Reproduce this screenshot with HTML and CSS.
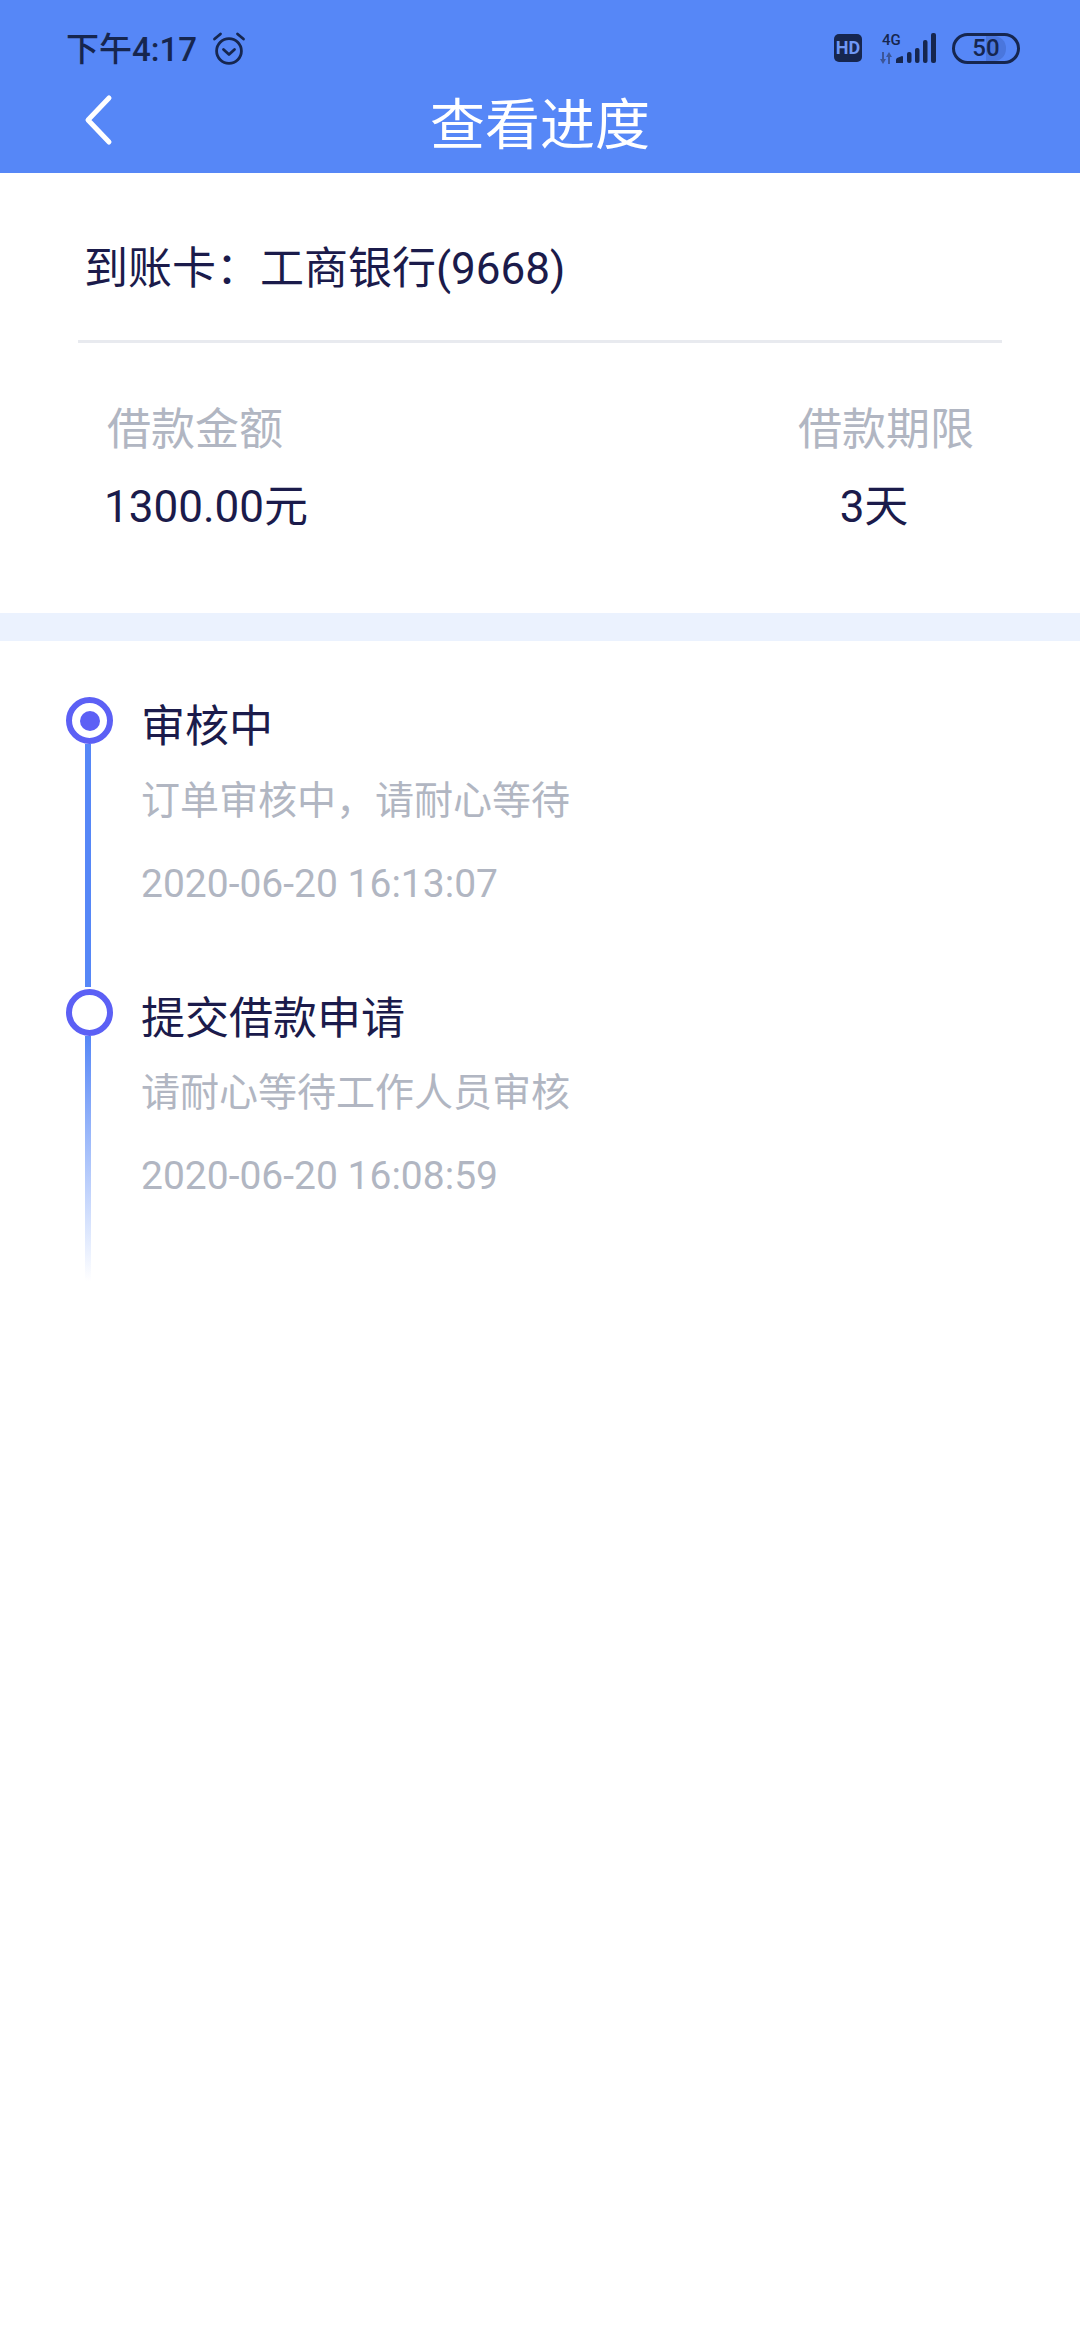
FILE: index.html
```html
<!DOCTYPE html>
<html lang="zh">
<head>
  <meta charset="UTF-8">
  <title>查看进度</title>
  <link rel="stylesheet" href="styles.css">
</head>
<body>
  <header class="top">
    <div class="status">
      <div class="status-left">
        <span class="time">下午4:17</span>
        <svg class="alarm" width="34" height="36" viewBox="0 0 34 36" fill="none" stroke="#16264f" stroke-width="2.8" stroke-linecap="round" stroke-linejoin="round">
          <circle cx="17" cy="21" r="12.4"/>
          <path d="M11.5 19.5l5.5 5 5.5-5"/>
          <path d="M2.5 9l6-5M31.5 9l-6-5"/>
        </svg>
      </div>
      <div class="status-right">
        <span class="hd">HD</span>
        <div class="net">
          <span class="net-label">4G</span>
          <svg class="net-arrows" width="14" height="12" viewBox="0 0 14 12" fill="#3c5699">
            <path d="M3 0h2v7h2l-3 5-3-5h2zM9 12h2V5h2l-3-5-3 5h2z"/>
          </svg>
        </div>
        <svg class="signal" width="40" height="30" viewBox="0 0 40 30" fill="#16264f">
          <path d="M0 30v-3q0-1 1-2l5-2q1 0 1 1v6z"/>
          <rect x="11" y="19" width="4.5" height="11" rx="2"/>
          <rect x="19" y="15" width="4.5" height="15" rx="2"/>
          <rect x="27" y="7" width="4.5" height="23" rx="2"/>
          <rect x="35" y="0" width="5" height="30" rx="2"/>
        </svg>
        <div class="battery">
          <span class="battery-fill"></span>
          <span class="battery-num">50</span>
        </div>
      </div>
    </div>
    <div class="nav">
      <svg class="back" width="34" height="54" viewBox="0 0 34 54" fill="none" stroke="#fff" stroke-width="5" stroke-linecap="round" stroke-linejoin="round">
        <path d="M25 4L4 26l21 22"/>
      </svg>
      <h1 class="title">查看进度</h1>
    </div>
  </header>

  <section class="card">
    <p class="bank">到账卡：工商银行(9668)</p>
    <div class="loan">
      <div class="loan-col">
        <span class="loan-label">借款金额</span>
        <span class="loan-value loan-amount">1300.00元</span>
      </div>
      <div class="loan-col loan-col-right">
        <span class="loan-label">借款期限</span>
        <span class="loan-value loan-term">3天</span>
      </div>
    </div>
  </section>

  <section class="timeline">
    <div class="step">
      <div class="rail">
        <span class="dot dot-active"></span>
        <span class="line"></span>
      </div>
      <div class="step-body">
        <h2 class="step-title">审核中</h2>
        <p class="step-desc">订单审核中，请耐心等待</p>
        <p class="step-date">2020-06-20 16:13:07</p>
      </div>
    </div>
    <div class="step">
      <div class="rail">
        <span class="dot"></span>
        <span class="line line-fade"></span>
      </div>
      <div class="step-body">
        <h2 class="step-title">提交借款申请</h2>
        <p class="step-desc">请耐心等待工作人员审核</p>
        <p class="step-date">2020-06-20 16:08:59</p>
      </div>
    </div>
  </section>
</body>
</html>
```

FILE: styles.css
```css
* {
  box-sizing: border-box;
}
body {
  margin: 0;
  background: #fff;
  font-family: Roboto, "Noto Sans CJK SC", sans-serif;
  color: #1b1b4b;
}
h1, h2, p {
  margin: 0;
  font-weight: 400;
}

/* top bar */
.top {
  height: 173px;
  background: #5687f7;
}
.status {
  height: 76px;
  padding: 20px 60px 0 66px;
  display: flex;
  justify-content: space-between;
  align-items: center;
  color: #16264f;
}
.status-left, .status-right {
  display: flex;
  align-items: center;
}
.time {
  margin-top: -2px;
  font-size: 33px;
  font-weight: 500;
}
.alarm {
  margin-left: 15px;
}
.hd {
  width: 28px;
  height: 28px;
  border-radius: 5px;
  background: #16264f;
  color: #6f98f5;
  font-size: 18px;
  font-weight: 700;
  line-height: 28px;
  text-align: center;
}
.net {
  width: 26px;
  margin-left: 17px;
  display: flex;
  flex-direction: column;
  align-items: flex-start;
}
.net-label {
  margin-left: 3px;
  font-size: 15px;
  font-weight: 500;
  line-height: 15px;
}
.net-arrows {
  margin-top: 4px;
}
.signal {
  margin-left: -9px;
}
.battery {
  position: relative;
  width: 68px;
  height: 31px;
  margin-left: 16px;
  border: 3px solid #16264f;
  border-radius: 16px;
  overflow: hidden;
  display: flex;
  align-items: center;
  justify-content: center;
}
.battery-fill {
  position: absolute;
  top: 0;
  bottom: 0;
  left: 50%;
  width: 32%;
  background: #4a76dd;
  border-radius: 0 12px 12px 0;
}
.battery-num {
  position: relative;
  font-size: 24px;
  font-weight: 500;
}
.nav {
  position: relative;
  height: 97px;
  padding-bottom: 10px;
  display: flex;
  align-items: center;
  justify-content: center;
}
.back {
  position: absolute;
  left: 84px;
  top: 18px;
}
.title {
  font-size: 55px;
  color: #fff;
}

/* card */
.card {
  height: 440px;
  padding: 0 78px;
}
.bank {
  height: 170px;
  padding: 61px 6px 0;
  border-bottom: 3px solid #e8eaef;
  font-size: 44px;
  line-height: 70px;
}
.loan {
  padding: 0 28px 0 29px;
  display: flex;
  justify-content: space-between;
}
.loan-col {
  padding-top: 57px;
  display: flex;
  flex-direction: column;
  align-items: flex-start;
}
.loan-col-right {
  align-items: center;
}
.loan-label {
  font-size: 44px;
  line-height: 60px;
  color: #b1b6c2;
}
.loan-value {
  margin-top: 17px;
  font-size: 44px;
  line-height: 60px;
}
.loan-amount {
  margin-left: -3px;
}
.loan-term {
  margin-right: 24px;
}

/* timeline */
.timeline {
  border-top: 28px solid #ebf2fe;
  padding: 56px 0 0 66px;
}
.step {
  display: flex;
  height: 292px;
}
.rail {
  width: 47px;
  display: flex;
  flex-direction: column;
  align-items: center;
}
.dot {
  flex: none;
  width: 47px;
  height: 47px;
  border: 6px solid #5c60f5;
  border-radius: 50%;
  display: flex;
  align-items: center;
  justify-content: center;
}
.dot-active::after {
  content: "";
  width: 20px;
  height: 20px;
  border-radius: 50%;
  background: #5c60f5;
}
.line {
  flex: 1;
  width: 6px;
  margin-right: 3px;
  margin-bottom: 2px;
  background: #5687f7;
}
.line-fade {
  margin-bottom: 0;
  background: linear-gradient(#5687f7, #fff);
}
.step-body {
  padding-left: 28px;
}
.step-title {
  font-size: 44px;
  line-height: 60px;
}
.step-desc {
  margin-top: 16px;
  font-size: 39px;
  line-height: 56px;
  color: #b1b6c2;
}
.step-date {
  margin-top: 27px;
  font-size: 39px;
  line-height: 56px;
  color: #b1b6c2;
}
```
